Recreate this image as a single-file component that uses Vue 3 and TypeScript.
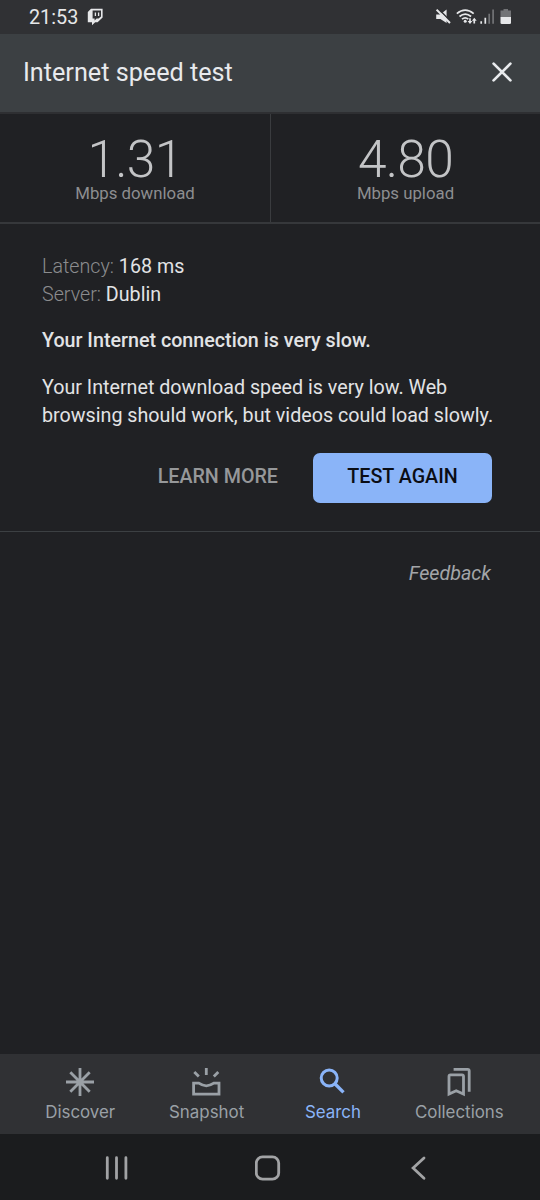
<script setup lang="ts">
interface Metric { value: string; label: string }
interface Detail { name: string; value: string }
interface Tab { id: string; label: string; active: boolean }

const metrics: Metric[] = [
  { value: '1.31', label: 'Mbps download' },
  { value: '4.80', label: 'Mbps upload' },
]
const details: Detail[] = [
  { name: 'Latency:', value: '168 ms' },
  { name: 'Server:', value: 'Dublin' },
]
const tabs: Tab[] = [
  { id: 'discover', label: 'Discover', active: false },
  { id: 'snapshot', label: 'Snapshot', active: false },
  { id: 'search', label: 'Search', active: true },
  { id: 'collections', label: 'Collections', active: false },
]
</script>

<template>
  <div class="screen">
    <div class="status">
      <span class="time">21:53</span>
      <svg class="twitch" width="17" height="18" viewBox="0 0 17 18">
        <path fill="#e6e7e9" fill-rule="evenodd" d="M4 .8H15.6V9.6L10.6 14.2H8.2L5 17.2V14.2H.8V4ZM5.6 2.6V10.6H7.6V12.4L9.6 10.6H11.6L14 8.6V2.6Z" />
        <path stroke="#e6e7e9" stroke-width="1.3" d="M8.4 4.6V8M11.6 4.6V8" />
      </svg>
      <svg class="signals" width="80" height="18" viewBox="0 0 80 18">
        <g fill="#e6e7e9">
          <path d="M.2 6.4H4.2L10.6 1.4V15L4.4 11H.2Z" />
          <path d="M1.9 .3L14.4 13.3" stroke="#303134" stroke-width="1.6" />
          <path d="M.6 1.6L14 15" stroke="#e6e7e9" stroke-width="2" />
        </g>
        <g fill="none" stroke="#e6e7e9" stroke-width="1.7">
          <path d="M20.8 5.7Q29.2 -1.3 37.7 5.7" />
          <path d="M23.5 8.5Q29.2 3.6 35.1 8.5" />
          <path d="M26 11.2Q29.2 8.5 32.3 11.2" />
        </g>
        <circle cx="29.2" cy="13.2" r="1.5" fill="#e6e7e9" />
        <path fill="#e6e7e9" d="M33.2 10.2H34.8V13H36.4L34 16L31.6 13H33.2ZM37.4 15.6V12.8H35.9L38.3 9.8L40.7 12.8H39.1V15.6Z" />
        <path stroke="#e6e7e9" stroke-width="1.7" d="M45.2 13.2V15.8M49.3 9.8V15.8" />
        <path stroke="#727376" stroke-width="1.7" d="M53.2 5.8V15.8M57.1 1.5V15.8" />
        <path fill="#727376" d="M67.5 1H72V2.5H75V9.3H64.5V2.5H67.5Z" />
        <path fill="#e6e7e9" d="M64.5 9H75V14.8Q75 16.1 73.7 16.1H65.8Q64.5 16.1 64.5 14.8Z" />
      </svg>
    </div>

    <header class="header">
      <h1 class="title">Internet speed test</h1>
      <svg class="close" width="22" height="22" viewBox="0 0 22 22">
        <path d="M2.6 2.6L19.4 19.4M19.4 2.6L2.6 19.4" fill="none" stroke="#e8eaed" stroke-width="2.7" stroke-linecap="round" />
      </svg>
    </header>

    <section class="metrics">
      <div v-for="m in metrics" :key="m.label" class="metric">
        <div class="value">{{ m.value }}</div>
        <div class="label">{{ m.label }}</div>
      </div>
    </section>

    <section class="result">
      <div v-for="d in details" :key="d.name" class="detail">
        <span class="name">{{ d.name }}</span> {{ d.value }}
      </div>
      <p class="verdict">Your Internet connection is very slow.</p>
      <p class="advice">Your Internet download speed is very low. Web browsing should work, but videos could load slowly.</p>
      <div class="actions">
        <button class="learn">LEARN MORE</button>
        <button class="again">TEST AGAIN</button>
      </div>
    </section>

    <main class="rest"><a class="feedback">Feedback</a></main>

    <nav class="tabs">
      <div v-for="t in tabs" :key="t.id" class="tab" :class="[t.id, { active: t.active }]">
        <svg class="icon" width="30" height="30" viewBox="0 0 30 30" fill="none" stroke="currentColor" stroke-width="2.8">
          <path v-if="t.id === 'discover'" d="M15 1V29M1 15H29M5.3 5.3L24.7 24.7M24.7 5.3L5.3 24.7" />
          <template v-else-if="t.id === 'snapshot'">
            <path d="M14.3 1V8M2.3 5L6.8 9.5M26.3 5L21.8 9.5" />
            <path d="M1.6 16.1H6.8Q10.8 18.8 14.3 18.8T21.8 16.1H27V27.1H1.6Z" />
          </template>
          <template v-else-if="t.id === 'search'">
            <circle cx="11.2" cy="11" r="8" stroke-width="3" />
            <path d="M16.9 16.8L25.5 25.4" stroke-width="3.4" />
          </template>
          <template v-else>
            <path d="M5 27V9.3Q5 7.8 6.5 7.8H18Q19.5 7.8 19.5 9.3V27L12.2 23.8Z" />
            <path d="M9.6 2.3H23.7Q25.2 2.3 25.2 3.8V24.7" />
          </template>
        </svg>
        <span class="tab-label">{{ t.label }}</span>
      </div>
    </nav>

    <div class="system">
      <svg width="26" height="26" viewBox="0 0 26 26"><path d="M3.3 2.7V23.3M12.5 2.7V23.3M21.9 2.7V23.3" /></svg>
      <svg width="26" height="26" viewBox="0 0 26 26"><rect x="1.3" y="1.8" width="22.4" height="22.4" rx="6.3" /></svg>
      <svg width="26" height="26" viewBox="0 0 26 26"><path d="M19 3L8.1 13L19 23.2" /></svg>
    </div>
  </div>
</template>

<style>
body { margin: 0; background: #202124; }
</style>

<style scoped>
.screen {
  width: 540px;
  height: 1200px;
  display: flex;
  flex-direction: column;
  overflow: hidden;
  background: #202124;
  color: #e2e3e5;
  font-family: Roboto, "Liberation Sans", sans-serif;
}
.status {
  height: 34px;
  flex: none;
  display: flex;
  align-items: center;
  padding: 0 24px 0 29px;
  background: #303134;
}
.time { font-size: 19.8px; line-height: 34px; padding-top: 1px; color: #e6e7e9; }
.twitch { margin-left: 9px; }
.signals { margin-left: auto; }
.header {
  box-sizing: border-box;
  height: 80px;
  flex: none;
  display: flex;
  align-items: center;
  justify-content: space-between;
  padding: 0 27px 2px 23px;
  background: #3c4043;
  border-bottom: 2px solid #2e2f32;
}
.title { margin: 0; font-size: 25.2px; font-weight: 400; color: #e8eaed; }
.metrics { display: flex; height: 108px; flex: none; border-bottom: 2px solid #36383b; }
.metric { box-sizing: border-box; width: 270px; text-align: center; padding-top: 20px; }
.metric + .metric { border-left: 1px solid #3a3c3f; }
.value { font-size: 51.5px; line-height: 52px; font-weight: 300; letter-spacing: -0.7px; color: #c3c4c6; }
.label { font-size: 16.8px; line-height: 20px; color: #8d8e90; margin-top: -3px; }
.result {
  box-sizing: border-box;
  height: 308px;
  flex: none;
  padding: 29px 44px 0 42px;
  border-bottom: 1px solid #3c4043;
  font-size: 19.7px;
  line-height: 27.7px;
}
.name { font-weight: 300; color: #8b8c8e; }
.verdict { margin: 18.8px 0 19px; font-weight: 500; }
.advice { margin: 0; }
.actions { display: flex; justify-content: flex-end; margin: 24px 4px 0 0; }
button { border: 0; padding: 0; font: 500 19.7px/46px Roboto, sans-serif; }
.learn { background: transparent; color: #96989a; margin-right: 35px; padding-bottom: 2px; }
.again {
  box-sizing: border-box;
  width: 179px;
  height: 50px;
  padding-bottom: 2px;
  border-radius: 7px;
  background: #8ab4f8;
  color: #0b0d14;
}
.rest { flex: 1; padding: 28px 49px 0 0; text-align: right; }
.feedback { font-size: 19.7px; line-height: 28px; font-style: italic; color: #a3a5a8; }
.tabs { display: flex; height: 80px; flex: none; padding: 0 17px; background: #303134; }
.tab { width: 126.4px; display: flex; flex-direction: column; align-items: center; color: #9aa0a6; padding-top: 13px; }
.active { color: #8ab4f8; }
.icon { flex: none; }
.tab-label { font: 400 16.9px/22px Inter, "Open Sans", sans-serif; margin-top: 4px; }
.system {
  display: flex;
  justify-content: space-between;
  height: 66px;
  flex: none;
  box-sizing: border-box;
  padding: 21px 109px 0 104px;
  background: #1b1c1e;
}
.system svg { fill: none; stroke: #a2a3a5; stroke-width: 2.8; stroke-linecap: round; }
</style>
